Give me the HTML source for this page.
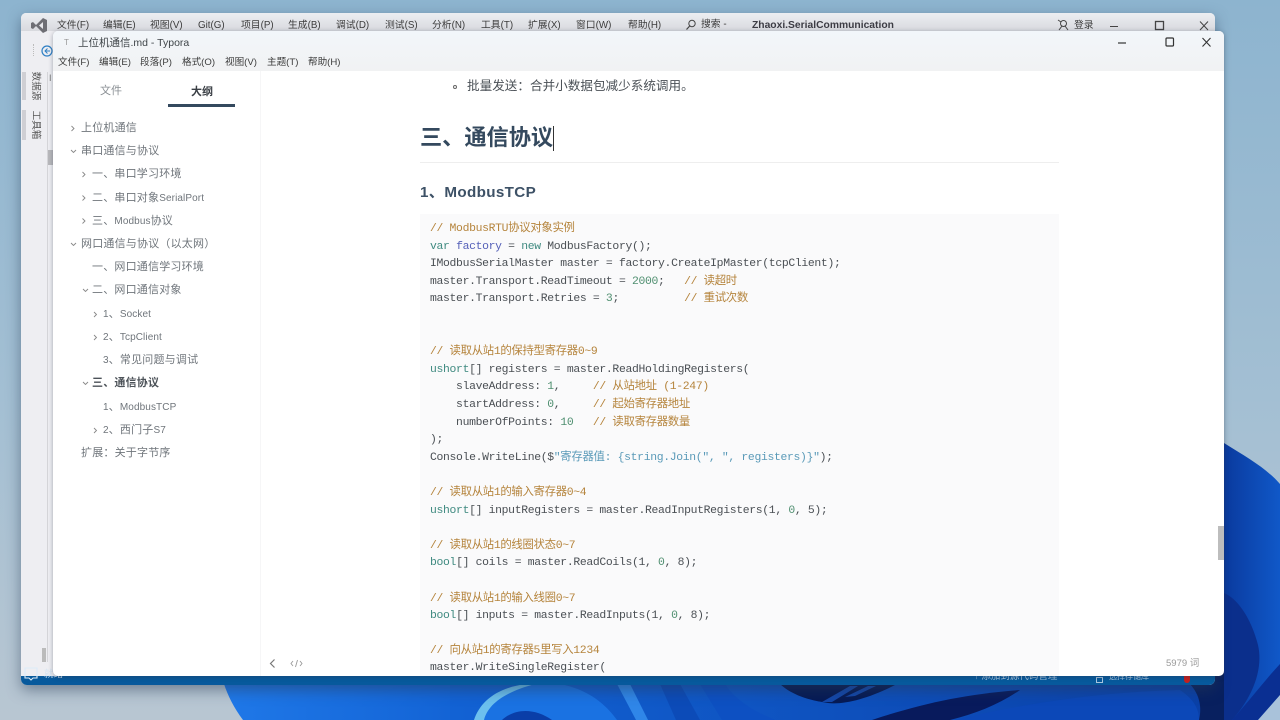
<!DOCTYPE html>
<html><head><meta charset="utf-8"><style>
html,body{margin:0;padding:0;width:1280px;height:720px;overflow:hidden;background:#8fb5cf}
body{position:relative;font-family:"Liberation Sans","Noto Sans CJK SC",sans-serif}
.a{position:absolute;white-space:pre}
.m{font-size:9.6px;color:#3c3c3c;line-height:14px;top:0}
.s{font-size:11px;letter-spacing:.2px;color:#6f757b;line-height:16px}
.s i{font-style:normal;font-size:10px;letter-spacing:.1px}
.c{position:absolute;left:430px;white-space:pre;font-family:"Liberation Mono","Noto Sans CJK SC",monospace;font-size:11.4px;letter-spacing:-.32px;line-height:17.6px;color:#4a4f54}
.g{color:#b5843c}.k{color:#3f8a80}.n{color:#4f8f70}.v{color:#5560b8}.w{color:#5a9ab8}
</style></head><body>
<svg class="a" style="left:0;top:0" width="1280" height="720" viewBox="0 0 1280 720">
<defs>
<linearGradient id="bg" x1="0" y1="0" x2="0" y2="1"><stop offset="0" stop-color="#8db4cf"/><stop offset=".55" stop-color="#a3bfd3"/><stop offset="1" stop-color="#b8c6d2"/></linearGradient>
<linearGradient id="b1" x1="0" y1="0" x2="1" y2="0"><stop offset="0" stop-color="#1f78e8"/><stop offset="1" stop-color="#1262d4"/></linearGradient>
<linearGradient id="b2" x1="0" y1="0" x2="1" y2="0"><stop offset="0" stop-color="#0a3a9e"/><stop offset="1" stop-color="#1058c8"/></linearGradient>
<linearGradient id="b3" x1="0" y1="0" x2="1" y2="0"><stop offset="0" stop-color="#1262d4"/><stop offset="1" stop-color="#0a3fa6"/></linearGradient>
</defs>
<rect width="1280" height="720" fill="url(#bg)"/>
<path d="M224 684H470V720H243C234 708 228 696 224 684Z" fill="url(#b1)"/>
<path d="M450 684H1226V720H450Z" fill="url(#b3)"/>
<path d="M474 720C480 702 496 688 526 684H560C590 690 606 705 617 720Z" fill="#1a72e2"/>
<path d="M474 720C480 702 496 688 526 684H535C505 692 488 704 484 720Z" fill="#6cc0ee"/>
<path d="M502 720C515 708 535 708 552 720Z" fill="#0a3ea8"/>
<path d="M617 684H630L648 720H636Z" fill="#2f86e8"/>
<path d="M660 684H680L700 720H676Z" fill="#0c4bb8"/>
<path d="M700 684H725C735 700 755 712 775 720H722Z" fill="#0d50c2"/>
<path d="M780 684H897C870 698 845 705 828 703C808 700 792 695 780 684Z" fill="#061a55"/>
<path d="M822 702L850 686H858L832 702Z" fill="#1347aa"/>
<path d="M845 697L868 686H876L855 696Z" fill="#1347aa"/>
<path d="M872 720C920 704 965 694 1020 690C1000 704 975 714 950 720Z" fill="#081a5c"/>
<path d="M955 720C1020 704 1100 692 1180 690C1195 700 1199 710 1199 720Z" fill="#0c48b8"/>
<path d="M1190 670H1226V720H1199C1202 708 1200 695 1190 684Z" fill="#08205f"/>
<path d="M1224 443C1248 458 1266 468 1280 484V720H1224Z" fill="url(#b2)"/>
<path d="M1224 593C1240 600 1252 622 1258 645C1264 672 1250 700 1232 720H1224Z" fill="#0b2f8c"/>
<path d="M1232 720C1250 700 1265 680 1280 664V695L1258 720Z" fill="#0a2f92"/>
<path d="M1258 720L1280 695V720Z" fill="#a9c2da"/>
</svg>

<!-- VS window -->
<div class="a" style="left:21px;top:13px;width:1194px;height:672px;background:#eeeef2;border-radius:5px 5px 6px 6px;box-shadow:0 5px 14px rgba(40,60,85,.5);overflow:hidden">
  <div class="a" style="left:0;top:0;width:1194px;height:18px;background:linear-gradient(#eceef2,#d8d9de)"></div>
  <div class="a" style="left:0;bottom:0;width:1194px;height:9px;background:#07599c"></div>
</div>
<svg class="a" style="left:30px;top:17px" width="18" height="17" viewBox="0 0 18 17"><path d="M1 6L3 5L6 8L13 1L17 3V14L13 16L6 9L3 12L1 11Z" fill="#6e6e74"/><path d="M13 5V12L9 8.500Z" fill="#e8e8ec"/></svg>
<div class="a m" style="left:57px;top:19px;font-size:9.8px">文件(F)</div>
<div class="a m" style="left:103px;top:19px;font-size:9.8px">编辑(E)</div>
<div class="a m" style="left:150px;top:19px;font-size:9.8px">视图(V)</div>
<div class="a m" style="left:198px;top:19px;font-size:9.8px">Git(G)</div>
<div class="a m" style="left:241px;top:19px;font-size:9.8px">项目(P)</div>
<div class="a m" style="left:288px;top:19px;font-size:9.8px">生成(B)</div>
<div class="a m" style="left:336px;top:19px;font-size:9.8px">调试(D)</div>
<div class="a m" style="left:385px;top:19px;font-size:9.8px">测试(S)</div>
<div class="a m" style="left:432px;top:19px;font-size:9.8px">分析(N)</div>
<div class="a m" style="left:481px;top:19px;font-size:9.8px">工具(T)</div>
<div class="a m" style="left:528px;top:19px;font-size:9.8px">扩展(X)</div>
<div class="a m" style="left:576px;top:19px;font-size:9.8px">窗口(W)</div>
<div class="a m" style="left:628px;top:19px;font-size:9.8px">帮助(H)</div>
<svg class="a" style="left:685px;top:19px" width="12" height="12" viewBox="0 0 12 12"><circle cx="7" cy="4.500" r="3.200" fill="none" stroke="#444" stroke-width="1"/><path d="M4.700 7L1.500 10.500" stroke="#444" stroke-width="1.200"/></svg>
<div class="a m" style="left:701px;top:18px;font-size:9.800px">搜索 -</div>
<div class="a" style="left:752px;top:18px;font-size:10.300px;line-height:15px;font-weight:bold;color:#3c3c44">Zhaoxi.SerialCommunication</div>
<svg class="a" style="left:1057px;top:19px" width="13" height="13" viewBox="0 0 13 13"><circle cx="6.500" cy="4.500" r="3" fill="none" stroke="#444"/><path d="M2 11L5 7M11 11L8 7M1 1L4 3" stroke="#444"/></svg>
<div class="a m" style="left:1074px;top:19px;font-size:9.800px">登录</div>
<svg class="a" style="left:1110px;top:18px" width="100" height="14" viewBox="0 0 100 14"><path d="M0 8.500H8" stroke="#444" stroke-width="1"/><rect x="45.500" y="3.500" width="8" height="8" fill="none" stroke="#444" stroke-width="1.300"/><path d="M90 3.500L98 12M98 3.500L90 12" stroke="#444" stroke-width="1"/></svg>

<!-- VS left strip -->
<div class="a" style="left:33px;top:44px;width:3px;height:12px;border-left:1px dotted #bbb"></div>
<svg class="a" style="left:41px;top:45px" width="12" height="12" viewBox="0 0 12 12"><circle cx="6" cy="6" r="5" fill="none" stroke="#2f7fc4" stroke-width="1.200"/><path d="M6.500 3.500L4 6L6.500 8.500M4 6H9" fill="none" stroke="#2f7fc4"/></svg>
<div class="a" style="left:22px;top:72px;width:4px;height:28px;background:#cfcfd4"></div>
<div class="a" style="left:22px;top:110px;width:4px;height:30px;background:#cfcfd4"></div>
<div class="a" style="left:20px;top:80px;width:30px;height:12px;font-size:9.600px;line-height:12px;color:#555;text-align:center;transform:rotate(90deg)">数据源</div>
<div class="a" style="left:20px;top:119px;width:30px;height:12px;font-size:9.600px;line-height:12px;color:#555;text-align:center;transform:rotate(90deg)">工具箱</div>
<div class="a" style="left:47px;top:72px;width:1px;height:590px;background:#d4d4d8"></div>
<div class="a" style="left:48px;top:150px;width:5px;height:15px;background:#b8b8bc"></div>
<div class="a" style="left:49px;top:72px;width:4px;height:12px;color:#777;font-size:9px;line-height:12px">I</div>
<div class="a" style="left:42px;top:648px;width:4px;height:14px;background:#bbb"></div>
<svg class="a" style="left:24px;top:667px" width="15" height="15" viewBox="0 0 15 15"><path d="M1 1H13V11H9L7 13L5 11H1Z" fill="none" stroke="#dcecf8" stroke-width="1.100"/></svg>
<div class="a" style="left:44px;top:668px;font-size:9.500px;line-height:13px;color:#d5e4f2">就绪</div>
<div class="a" style="left:974px;top:670px;font-size:9.500px;line-height:13px;color:#a8c6e0">↑ 添加到源代码管理</div>
<div class="a" style="left:1096px;top:677px;width:7px;height:6px;border:1px solid #a8c6e0;box-sizing:border-box"></div>
<div class="a" style="left:1109px;top:670px;font-size:8px;line-height:13px;color:#a8c6e0">选择存储库</div>
<div class="a" style="left:1184px;top:676px;width:6px;height:7px;background:#c8201e;border-radius:0 0 3px 3px"></div>

<!-- Typora -->
<div class="a" style="left:53px;top:31px;width:1171px;height:645px;background:#fff;border-radius:5px;box-shadow:0 1px 5px rgba(40,50,70,.4);overflow:hidden">
  <div class="a" style="left:0;top:0;width:1171px;height:40px;background:linear-gradient(#f2f6fa,#f1f2f3)"></div>
  <div class="a" style="left:207px;top:40px;width:1px;height:605px;background:#f6f6f7"></div>
</div>
<div class="a" style="left:64px;top:38px;font-size:8px;line-height:10px;color:#999">T</div>
<div class="a" style="left:78px;top:35px;font-size:10.500px;line-height:16px;color:#3f4448">上位机通信.md - Typora</div>
<div class="a m" style="left:58px;top:56px">文件(F)</div>
<div class="a m" style="left:99px;top:56px">编辑(E)</div>
<div class="a m" style="left:140px;top:56px">段落(P)</div>
<div class="a m" style="left:182px;top:56px">格式(O)</div>
<div class="a m" style="left:225px;top:56px">视图(V)</div>
<div class="a m" style="left:267px;top:56px">主题(T)</div>
<div class="a m" style="left:308px;top:56px">帮助(H)</div>
<svg class="a" style="left:1118px;top:35px" width="100" height="14" viewBox="0 0 100 14"><path d="M0 8H8" stroke="#333" stroke-width="1.200"/><rect x="48" y="3" width="7.500" height="8" rx="1" fill="none" stroke="#333" stroke-width="1.200"/><path d="M84.500 3L92.500 11.500M92.500 3L84.500 11.500" stroke="#333" stroke-width="1.100"/></svg>

<!-- sidebar -->
<div class="a" style="left:100px;top:83px;font-size:11px;line-height:16px;color:#8a8f94">文件</div>
<div class="a" style="left:191px;top:84px;font-size:11px;line-height:16px;color:#3a3f45;font-weight:bold">大纲</div>
<div class="a" style="left:168px;top:104px;width:67px;height:3px;background:#34495e"></div>

<svg class="a" style="left:0;top:0" width="120" height="450" viewBox="0 0 120 450" fill="none" stroke="#888" stroke-width=".9">
<path d="M71.500 126L74 128.500L71.500 131"/><path d="M71 150L73.500 152.500L76 150"/>
<path d="M82.500 172L85 174.500L82.500 177"/><path d="M82.500 195.500L85 198L82.500 200.500"/><path d="M82.500 218.500L85 221L82.500 223.500"/>
<path d="M71 243L73.500 245.500L76 243"/><path d="M83 289L85.500 291.500L88 289"/>
<path d="M94 312L96.500 314.500L94 317"/><path d="M94 335L96.500 337.500L94 340"/>
<path d="M83 382L85.500 384.500L88 382"/><path d="M94 428L96.500 430.500L94 433"/>
</svg>
<div class="a s" style="left:81px;top:120px">上位机通信</div>
<div class="a s" style="left:81px;top:143px">串口通信与协议</div>
<div class="a s" style="left:92px;top:166px">一、串口学习环境</div>
<div class="a s" style="left:92px;top:190px">二、串口对象<i>SerialPort</i></div>
<div class="a s" style="left:92px;top:213px">三、<i>Modbus</i>协议</div>
<div class="a s" style="left:81px;top:236px">网口通信与协议（以太网）</div>
<div class="a s" style="left:92px;top:259px">一、网口通信学习环境</div>
<div class="a s" style="left:92px;top:282px">二、网口通信对象</div>
<div class="a s" style="left:103px;top:306px"><i>1</i>、<i>Socket</i></div>
<div class="a s" style="left:103px;top:329px"><i>2</i>、<i>TcpClient</i></div>
<div class="a s" style="left:103px;top:352px"><i>3</i>、常见问题与调试</div>
<div class="a s" style="left:92px;top:375px;font-weight:bold;color:#4c5258">三、通信协议</div>
<div class="a s" style="left:103px;top:399px"><i>1</i>、<i>ModbusTCP</i></div>
<div class="a s" style="left:103px;top:422px"><i>2</i>、西门子<i>S7</i></div>
<div class="a s" style="left:81px;top:445px">扩展：关于字节序</div>
<svg class="a" style="left:267px;top:657px" width="40" height="13" viewBox="0 0 40 13" fill="none" stroke="#777"><path d="M7.500 2.500L3.500 6.500L7.500 10.500" stroke-width="1.200"/><path d="M26 4L24 6.500L26 9M33 4L35 6.500L33 9M30.500 3L28.500 10" stroke="#999" stroke-width=".9"/></svg>
<div class="a" style="left:1166px;top:657px;font-size:9.500px;line-height:13px;color:#9a9a9a">5979 词</div>

<!-- content -->
<div class="a" style="left:453px;top:85px;width:4px;height:4px;border:1px solid #666;border-radius:50%;box-sizing:border-box"></div>
<div class="a" style="left:467px;top:77px;font-size:12.600px;line-height:18px;color:#4a5056">批量发送：合并小数据包减少系统调用。</div>
<div class="a" style="left:420px;top:122px;font-size:22.200px;line-height:32px;font-weight:bold;color:#34495e">三、通信协议</div>
<div class="a" style="left:553px;top:126px;width:1px;height:25px;background:#333"></div>
<div class="a" style="left:420px;top:162px;width:639px;height:1px;background:#eee"></div>
<div class="a" style="left:420px;top:182px;font-size:15.200px;line-height:22px;font-weight:bold;color:#3d5166;letter-spacing:.35px">1、ModbusTCP</div>
<div class="a" style="left:420px;top:214px;width:639px;height:462px;background:#fafafb"></div>

<div class="c" style="top:221px"><span class="g">// ModbusRTU协议对象实例</span></div>
<div class="c" style="top:238.600px"><span class="k">var</span> <span class="v">factory</span> = <span class="k">new</span> ModbusFactory();</div>
<div class="c" style="top:256.200px">IModbusSerialMaster master = factory.CreateIpMaster(tcpClient);</div>
<div class="c" style="top:273.800px">master.Transport.ReadTimeout = <span class="n">2000</span>;   <span class="g">// 读超时</span></div>
<div class="c" style="top:291.400px">master.Transport.Retries = <span class="n">3</span>;          <span class="g">// 重试次数</span></div>
<div class="c" style="top:344.200px"><span class="g">// 读取从站1的保持型寄存器0~9</span></div>
<div class="c" style="top:361.800px"><span class="k">ushort</span>[] registers = master.ReadHoldingRegisters(</div>
<div class="c" style="top:379.400px">    slaveAddress: <span class="n">1</span>,     <span class="g">// 从站地址 (1-247)</span></div>
<div class="c" style="top:397px">    startAddress: <span class="n">0</span>,     <span class="g">// 起始寄存器地址</span></div>
<div class="c" style="top:414.600px">    numberOfPoints: <span class="n">10</span>   <span class="g">// 读取寄存器数量</span></div>
<div class="c" style="top:432.200px">);</div>
<div class="c" style="top:449.800px">Console.WriteLine($<span class="w">"寄存器值: {string.Join(", ", registers)}"</span>);</div>
<div class="c" style="top:485px"><span class="g">// 读取从站1的输入寄存器0~4</span></div>
<div class="c" style="top:502.600px"><span class="k">ushort</span>[] inputRegisters = master.ReadInputRegisters(1, <span class="n">0</span>, 5);</div>
<div class="c" style="top:537.800px"><span class="g">// 读取从站1的线圈状态0~7</span></div>
<div class="c" style="top:555.400px"><span class="k">bool</span>[] coils = master.ReadCoils(1, <span class="n">0</span>, 8);</div>
<div class="c" style="top:590.600px"><span class="g">// 读取从站1的输入线圈0~7</span></div>
<div class="c" style="top:608.200px"><span class="k">bool</span>[] inputs = master.ReadInputs(1, <span class="n">0</span>, 8);</div>
<div class="c" style="top:643.400px"><span class="g">// 向从站1的寄存器5里写入1234</span></div>
<div class="c" style="top:660px;height:16px;overflow:hidden">master.WriteSingleRegister(</div>

<div class="a" style="left:1218px;top:526px;width:6px;height:34px;background:#bdbdbd"></div>
</body></html>
